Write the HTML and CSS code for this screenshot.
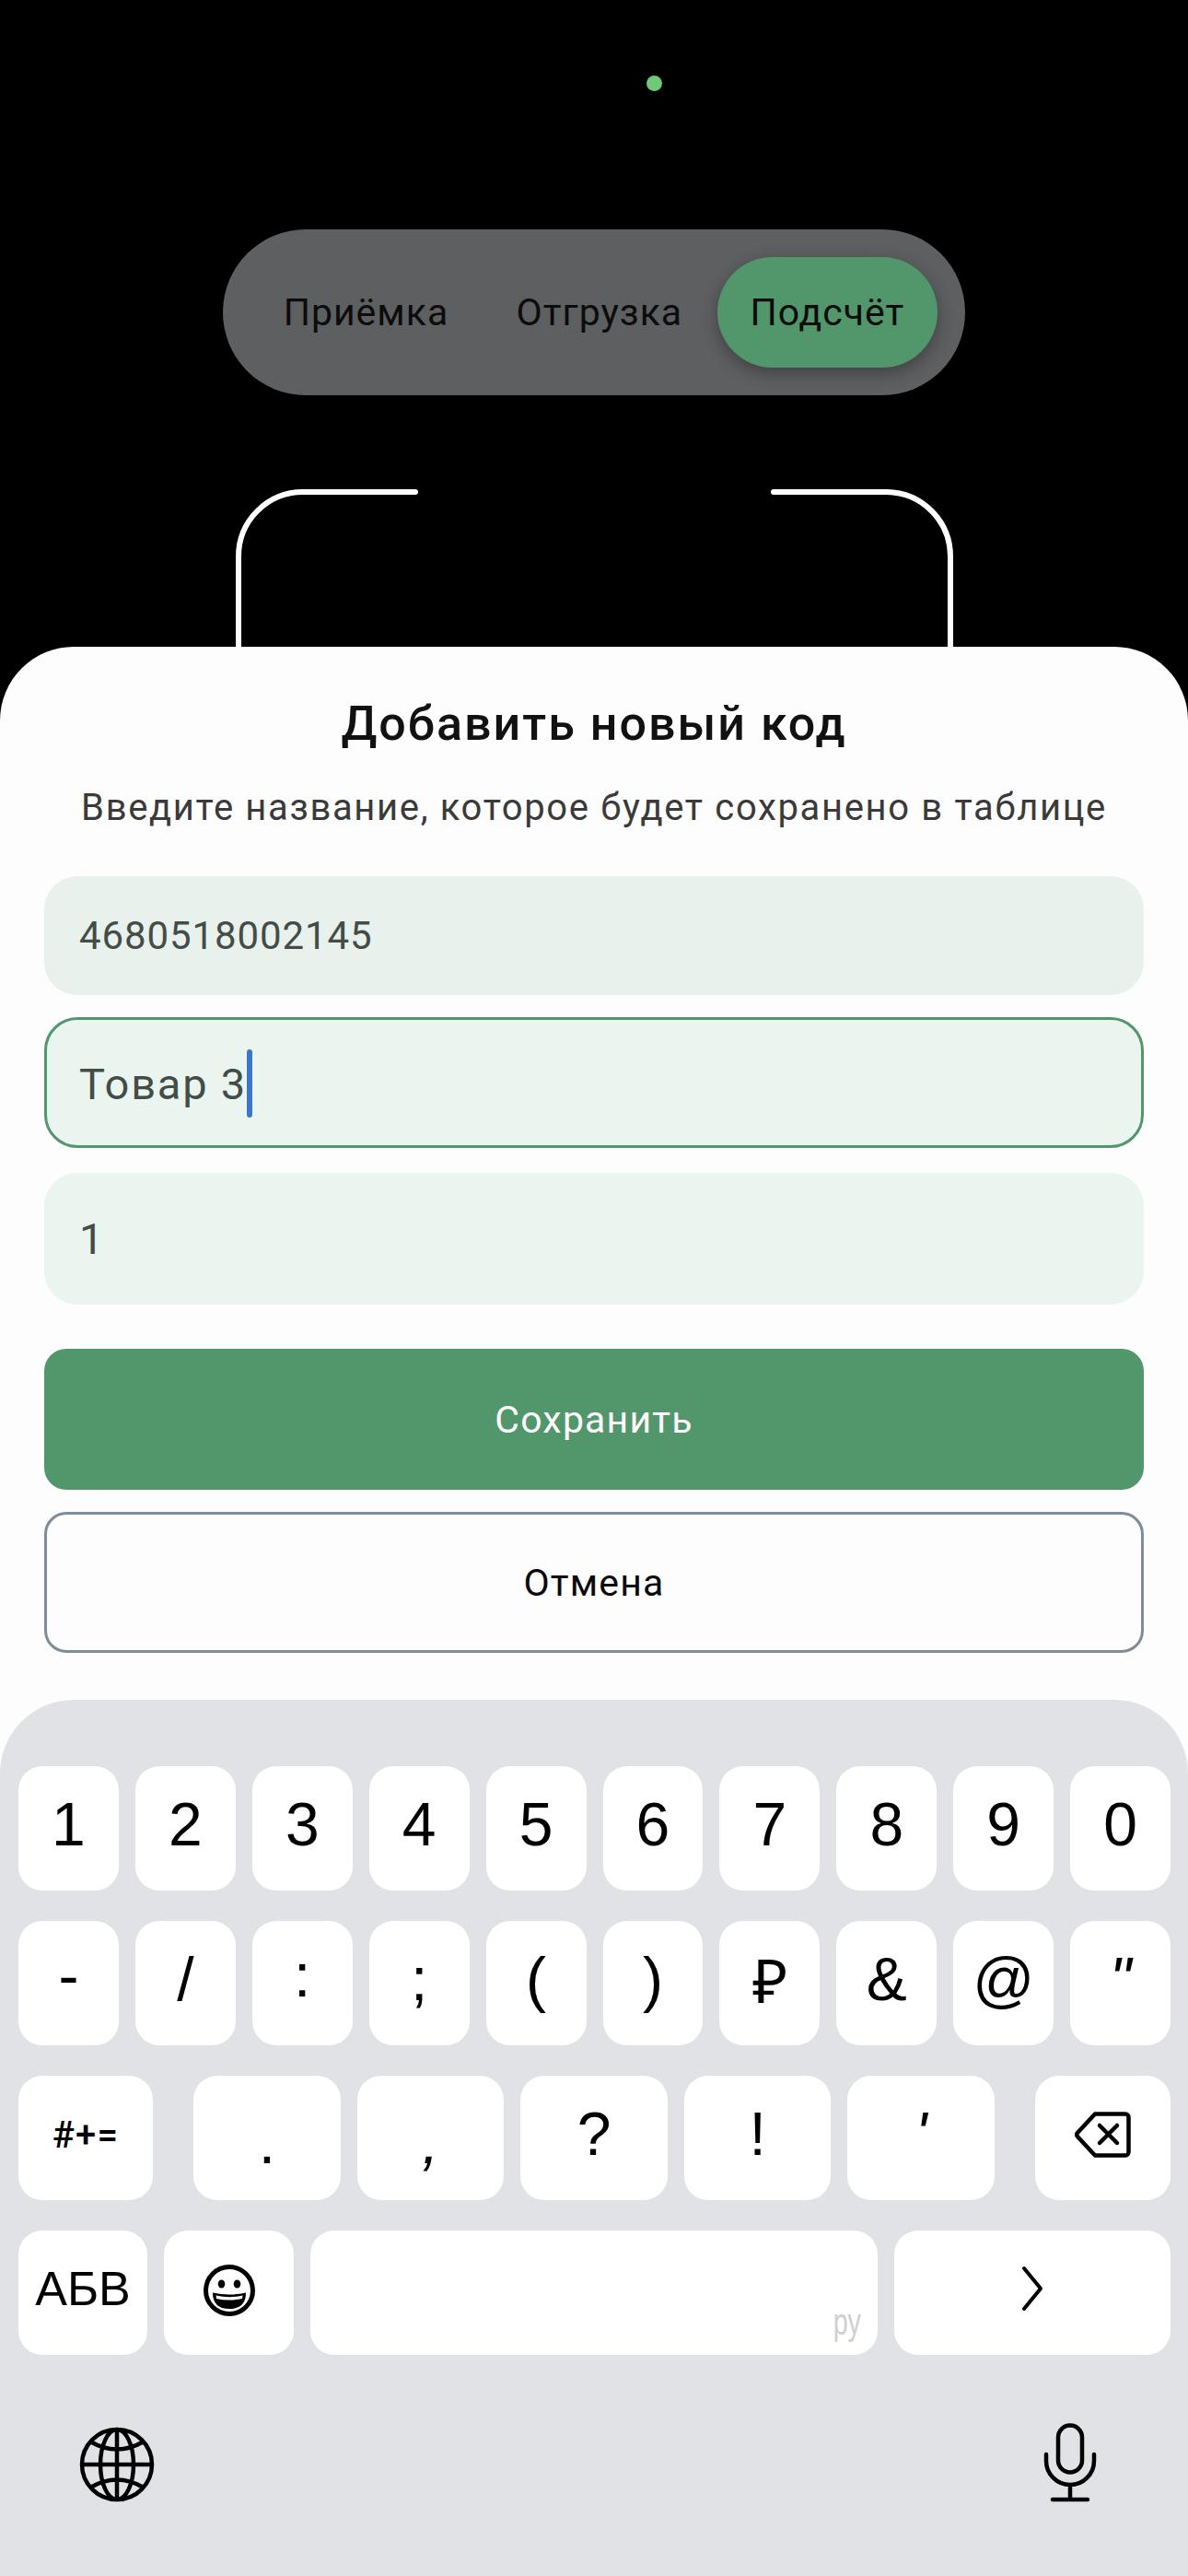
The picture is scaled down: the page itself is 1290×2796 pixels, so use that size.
FILE: index.html
```html
<!DOCTYPE html>
<html lang="ru">
<head>
    <meta charset="UTF-8">
    <meta name="viewport" content="width=device-width, initial-scale=1.0">
    <title>Добавить новый код</title>
    <link rel="stylesheet" href="styles.css">
</head>
<body>
    <div class="scanner">
        <div class="status-dot"></div>
        <div class="mode-switch">
            <div class="mode-item">Приёмка</div>
            <div class="mode-item">Отгрузка</div>
            <div class="mode-item active">Подсчёт</div>
        </div>
        <svg class="scan-frame" width="780" height="171" viewBox="0 0 780 171">
            <path d="M195 3H73A70 70 0 0 0 3 73V171M584 3H707A70 70 0 0 1 776 73V171" fill="none" stroke="#fff" stroke-width="6" stroke-linecap="round"/>
        </svg>
    </div>

    <div class="sheet">
        <h1 class="sheet-title">Добавить новый код</h1>
        <p class="sheet-hint">Введите название, которое будет сохранено в таблице</p>

        <div class="field field-code">4680518002145</div>
        <div class="field field-focus">Товар 3<span class="caret"></span></div>
        <div class="field field-count">1</div>

        <div class="btn btn-save">Сохранить</div>
        <div class="btn btn-cancel">Отмена</div>

        <div class="keyboard">
            <div class="key-grid">
                <div class="key">1</div>
                <div class="key">2</div>
                <div class="key">3</div>
                <div class="key">4</div>
                <div class="key">5</div>
                <div class="key">6</div>
                <div class="key">7</div>
                <div class="key">8</div>
                <div class="key">9</div>
                <div class="key">0</div>
            </div>
            <div class="key-grid">
                <div class="key key-raised">-</div>
                <div class="key">/</div>
                <div class="key key-raised">:</div>
                <div class="key">;</div>
                <div class="key">(</div>
                <div class="key">)</div>
                <div class="key">₽</div>
                <div class="key">&amp;</div>
                <div class="key">@</div>
                <div class="key slant">"</div>
            </div>
            <div class="key-row">
                <div class="key key-symbols">#+=</div>
                <div class="key key-punct key-low">.</div>
                <div class="key key-punct key-low slant">,</div>
                <div class="key key-punct">?</div>
                <div class="key key-punct">!</div>
                <div class="key key-punct slant">'</div>
                <div class="key key-delete">
                    <svg width="61" height="50" viewBox="0 0 61 50" fill="none" stroke="#000" stroke-width="4.5" stroke-linecap="round" stroke-linejoin="round">
                        <path d="M22 2.5H55A3.5 3.5 0 0 1 58.5 6V44A3.5 3.5 0 0 1 55 47.5H22L3 27A3 3 0 0 1 3 23Z"/>
                        <path d="M27 15L46 34M46 15L27 34"/>
                    </svg>
                </div>
            </div>
            <div class="key-row">
                <div class="key key-letters">АБВ</div>
                <div class="key key-emoji">
                    <svg width="58" height="58" viewBox="0 0 58 58">
                        <circle cx="29" cy="29" r="25.5" fill="none" stroke="#000" stroke-width="5"/>
                        <ellipse cx="20.5" cy="22" rx="3.8" ry="4.5"/>
                        <ellipse cx="37.5" cy="22" rx="3.8" ry="4.5"/>
                        <path d="M11 31.5Q29 35.5 47 31.5Q47 49 29 49Q11 49 11 31.5Z"/>
                        <path d="M14.5 34.5Q29 38 43.5 34.5L43 38Q29 41 15 38Z" fill="#fff"/>
                    </svg>
                </div>
                <div class="key key-space"><span class="space-lang">ру</span></div>
                <div class="key key-return">
                    <svg width="24" height="50" viewBox="0 0 24 50" fill="none" stroke="#000" stroke-width="4" stroke-linecap="round" stroke-linejoin="round">
                        <path d="M3 3L21 25L3 47"/>
                    </svg>
                </div>
            </div>
            <div class="key-tools">
                <svg width="84" height="84" viewBox="0 0 84 84" fill="none" stroke="#000" stroke-width="4.5">
                    <circle cx="42" cy="42" r="38"/>
                    <ellipse cx="42" cy="42" rx="18" ry="38"/>
                    <path d="M42 4V80M4 42H80"/>
                    <path d="M13 17Q42 34 71 17M13 67Q42 50 71 67"/>
                </svg>
                <svg class="mic" width="58" height="86" viewBox="0 0 58 86" fill="none" stroke="#000" stroke-width="4.5" stroke-linecap="round">
                    <rect x="16" y="2.5" width="26" height="51" rx="13"/>
                    <path d="M3 34V41A26 26 0 0 0 55 41V34M29 67V82M10 83H48"/>
                </svg>
            </div>
        </div>
    </div>
</body>
</html>
```

FILE: styles.css
```css
* {
    box-sizing: border-box;
}
body {
    margin: 0;
    background-color: #000;
    font-family: Roboto, "Noto Sans", sans-serif;
}
.scanner {
    height: 702px;
    display: flex;
    flex-direction: column;
    align-items: center;
    overflow: hidden;
    padding-top: 82px;
}
.status-dot {
    width: 17px;
    height: 17px;
    margin-left: 130px;
    border-radius: 50%;
    background-color: #6fc977;
}
.mode-switch {
    width: 806px;
    height: 180px;
    margin-top: 150px;
    padding: 30px;
    display: flex;
    gap: 2px;
    border-radius: 90px;
    background-color: #5e5f60;
}
.mode-item {
    flex: 1 1 auto;
    display: flex;
    align-items: center;
    justify-content: center;
    border-radius: 60px;
    font-size: 41px;
    letter-spacing: 1px;
    white-space: nowrap;
    color: #0c0c0c;
}
.mode-item.active {
    background-color: #52966b;
    box-shadow: 0 6px 18px rgba(0, 0, 0, 0.32);
}
.scan-frame {
    display: block;
    flex-shrink: 0;
    margin-top: 102px;
    margin-left: 1px;
}
.sheet {
    height: 2094px;
    padding: 0 48px;
    display: flex;
    flex-direction: column;
    border-radius: 80px 80px 0 0;
    background-color: #fcfdfc;
}
.sheet-title {
    margin: 54px 0 0;
    text-align: center;
    font-size: 52px;
    line-height: 60px;
    font-weight: 500;
    letter-spacing: 2px;
    color: #111;
}
.sheet-hint {
    margin: 38px 0 0;
    text-align: center;
    font-size: 40px;
    line-height: 46px;
    letter-spacing: 1.65px;
    white-space: nowrap;
    color: #3a3a3a;
}
.field {
    display: flex;
    align-items: center;
    padding: 0 38px;
    border-radius: 36px;
    background-color: #eaf3ee;
    color: #434d48;
}
.field-code {
    height: 129px;
    margin-top: 51px;
    font-size: 42px;
    letter-spacing: 0.9px;
    background-color: #e9f1ed;
}
.field-focus {
    height: 142px;
    margin-top: 24px;
    padding-top: 2px;
    padding-left: 35px;
    font-size: 47px;
    letter-spacing: 1.8px;
    border: 3px solid #52966b;
    background-color: #ebf5f0;
}
.caret {
    width: 6px;
    height: 74px;
    margin-left: 0;
    border-radius: 3px;
    background-color: #3a78c8;
}
.field-count {
    height: 143px;
    margin-top: 27px;
    font-size: 47px;
    background-color: #ebf5f0;
}
.btn {
    display: flex;
    align-items: center;
    justify-content: center;
    border-radius: 24px;
    font-size: 41px;
    letter-spacing: 1.2px;
}
.btn-save {
    height: 153px;
    margin-top: 48px;
    background-color: #52966b;
    color: #fff;
}
.btn-cancel {
    height: 153px;
    margin-top: 24px;
    border: 3px solid #7f8c99;
    color: #0a0a0a;
}
.keyboard {
    height: 951px;
    margin: 51px -48px 0;
    padding: 72px 19px 0 20px;
    display: flex;
    flex-direction: column;
    gap: 33px;
    border-radius: 80px 80px 0 0;
    background-color: #e0e2e5;
    font-family: "Liberation Sans", Arial, sans-serif;
}
.key-grid {
    display: grid;
    grid-template-columns: repeat(10, 1fr);
    gap: 18px;
}
.key-row {
    display: flex;
    gap: 18px;
}
.key {
    height: 135px;
    padding-bottom: 10px;
    display: flex;
    align-items: center;
    justify-content: center;
    border-radius: 26px;
    background-color: #fff;
    font-size: 66px;
    color: #000;
}
.slant {
    font-style: italic;
}
.key-raised {
    padding-bottom: 18px;
}
.key-symbols {
    width: 146px;
    margin-right: 26px;
    padding-bottom: 6px;
    font-family: Roboto, sans-serif;
    font-size: 40px;
    font-weight: 500;
    letter-spacing: 1.2px;
}
.key-punct {
    flex: 1;
}
.key-low {
    padding: 8px 0 0;
}
.key-delete {
    width: 147px;
    margin-left: 26px;
    padding-bottom: 8px;
}
.key-letters {
    width: 140px;
    font-size: 52px;
}
.key-emoji {
    width: 141px;
    padding-bottom: 5px;
}
.key-space {
    flex: 1;
    padding: 0 18px 16px 0;
    align-items: flex-end;
    justify-content: flex-end;
}
.space-lang {
    display: block;
    font-size: 40px;
    line-height: 40px;
    color: #cfd0d1;
    transform: scaleX(0.72);
    transform-origin: right center;
}
.key-return {
    width: 300px;
    padding-bottom: 9px;
}
.key-tools {
    padding: 44px 80px 0 65px;
    display: flex;
    justify-content: space-between;
    align-items: flex-start;
}
.mic {
    margin-top: -3px;
}
```
